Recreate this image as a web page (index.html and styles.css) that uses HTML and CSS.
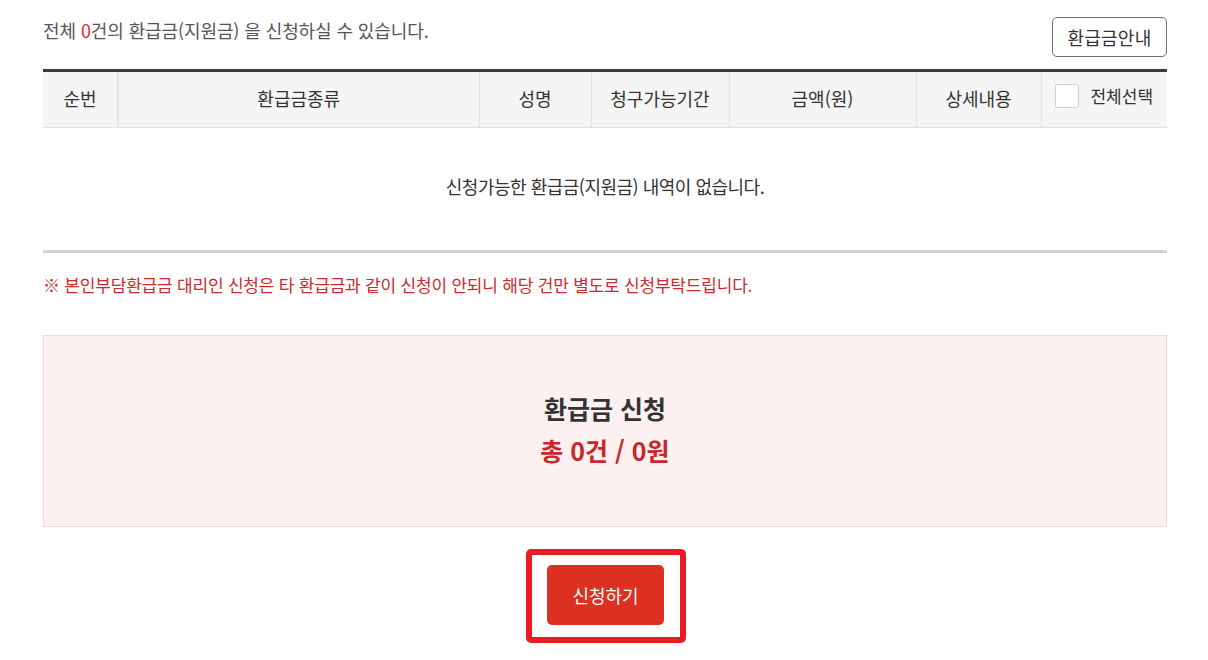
FILE: index.html
```html
<!DOCTYPE html>
<html lang="ko">
<head>
<meta charset="utf-8">
<title>환급금 신청</title>
<link rel="stylesheet" href="styles.css">
</head>
<body>
<div class="wrap">
  <div class="top-row">
    <p class="summary">전체 <span class="num">0</span>건의 환급금(지원금) 을 신청하실 수 있습니다.</p>
    <button class="guide-btn" type="button">환급금안내</button>
  </div>

  <table class="list">
    <colgroup>
      <col class="c1"><col class="c2"><col class="c3"><col class="c4"><col class="c5"><col class="c6"><col class="c7">
    </colgroup>
    <thead>
      <tr>
        <th class="first">순번</th>
        <th>환급금종류</th>
        <th>성명</th>
        <th>청구가능기간</th>
        <th>금액(원)</th>
        <th>상세내용</th>
        <th class="check-cell"><span class="check-all"><span class="checkbox"></span>전체선택</span></th>
      </tr>
    </thead>
    <tbody>
      <tr>
        <td class="empty" colspan="7">신청가능한 환급금(지원금) 내역이 없습니다.</td>
      </tr>
    </tbody>
  </table>

  <p class="notice"><span class="mark">※</span> 본인부담환급금 대리인 신청은 타 환급금과 같이 신청이 안되니 해당 건만 별도로 신청부탁드립니다.</p>

  <div class="apply-box">
    <p class="apply-title">환급금 신청</p>
    <p class="apply-total">총 0건 / 0원</p>
  </div>

  <div class="submit-area">
    <div class="highlight">
      <button class="submit-btn" type="button">신청하기</button>
    </div>
  </div>
</div>
</body>
</html>
```

FILE: styles.css
```css
* { box-sizing: border-box; }
html, body { margin: 0; padding: 0; background: #fff; }
body {
  font-family: "Noto Sans CJK KR", "Noto Sans", sans-serif;
  color: #333;
  font-size: 16px;
}
.wrap {
  width: 1124px;
  margin-left: 43px;
  padding-top: 17px;
}
.top-row {
  display: flex;
  justify-content: space-between;
  align-items: flex-start;
  height: 40px;
}
.summary {
  margin: 0;
  font-size: 18px;
  line-height: 26px;
  color: #555;
  letter-spacing: -0.1px;
}
.summary .num { color: #e0262a; }
.guide-btn {
  width: 115px;
  height: 40px;
  border: 1px solid #6e6e72;
  border-radius: 5px;
  background: #fff;
  font-family: inherit;
  font-size: 18px;
  color: #333;
  padding: 0;
  letter-spacing: 0.2px;
}
.list {
  margin-top: 12px;
  width: 100%;
  border-collapse: collapse;
  table-layout: fixed;
  border-top: 3px solid #3b3b47;
}
.c1 { width: 75px; }
.c2 { width: 361px; }
.c3 { width: 112px; }
.c4 { width: 138px; }
.c5 { width: 187px; }
.c6 { width: 125px; }
.c7 { width: 126px; }
.list th {
  height: 57px;
  background: #f5f5f5;
  font-weight: 400;
  font-size: 18px;
  color: #333;
  border-left: 1px solid #e4e4e4;
  border-bottom: 1px solid #e2e2e6;
  padding: 0 0 3px;
}
.list th.first { border-left: 0; border-right: 2px solid #e2e2e8; }
.list th.check-cell { font-size: 17px; }
.check-all {
  display: inline-flex;
  align-items: center;
  gap: 11px;
}
.checkbox {
  width: 24px;
  height: 24px;
  background: #fff;
  border: 1px solid #cfcfd3;
  border-radius: 2px;
}
.list td.empty {
  height: 124px;
  text-align: center;
  font-size: 18px;
  color: #333;
  border-bottom: 3px solid #d3d3d7;
  padding: 0 0 6px;
  letter-spacing: -0.5px;
}
.notice {
  margin: 20px 0 0;
  font-size: 17px;
  line-height: 24px;
  color: #cc2a2e;
  letter-spacing: -0.2px;
}
.notice .mark { font-weight: 300; }
.apply-box {
  margin-top: 38px;
  background: #fcf1f0;
  border: 1px solid #e6dedd;
  padding: 51px 0 55px;
  text-align: center;
}
.apply-title, .apply-total {
  margin: 0;
  font-size: 25px;
  line-height: 42px;
  font-weight: 700;
}
.apply-title { color: #333; }
.apply-total { color: #c8282a; }
.submit-area {
  display: flex;
  justify-content: center;
  margin-top: 22px;
}
.highlight {
  border: 6px solid #ec1c24;
  border-radius: 5px;
  padding: 10px 16px 12px 15px;
  margin-left: 2px;
}
.submit-btn {
  display: block;
  width: 117px;
  height: 60px;
  background: #dc3121;
  border: 0;
  border-radius: 5px;
  color: #fff;
  font-family: inherit;
  font-size: 18px;
  padding: 0;
}
```
